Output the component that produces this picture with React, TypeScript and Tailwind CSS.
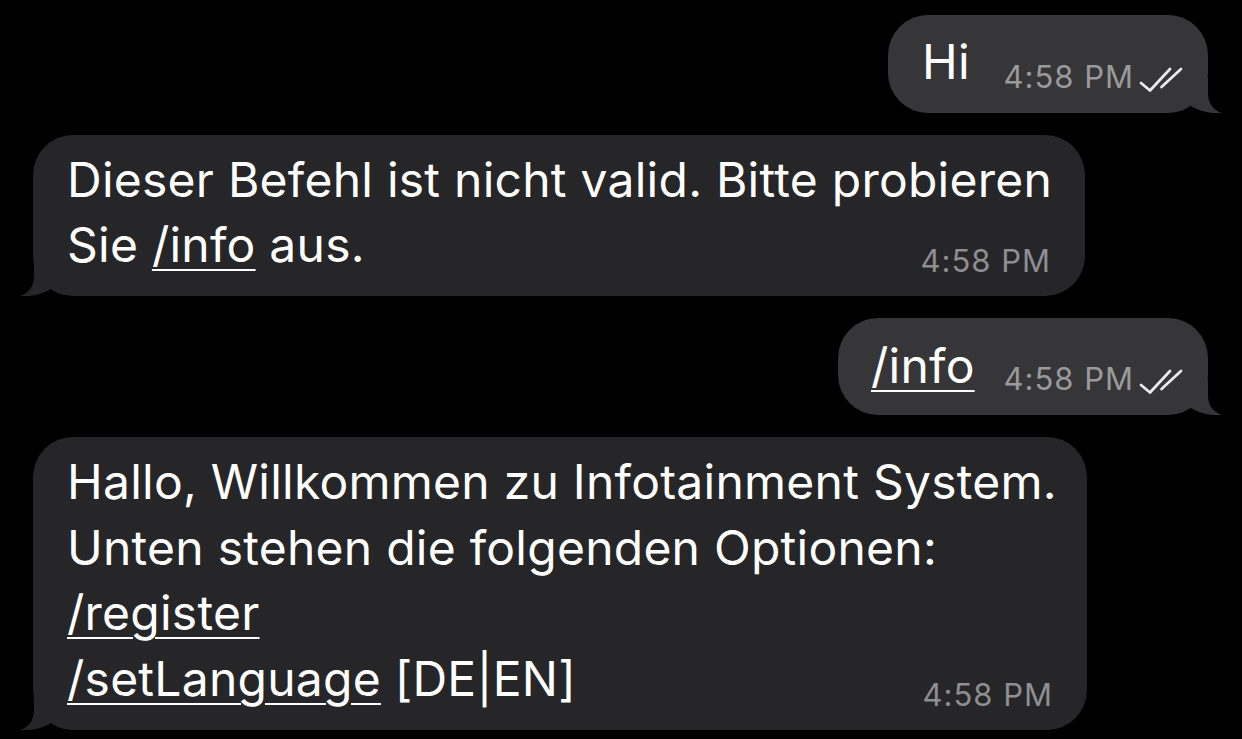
import React from "react";

const Checks = () => (
  <svg width="44" height="26" viewBox="0 0 44 26" fill="none" stroke="currentColor" strokeWidth="2.7" strokeLinecap="round" strokeLinejoin="round" className="text-white/90">
    <path d="M2 17 L11 24.5 L31 3" />
    <path d="M22.5 21 L42 3" />
  </svg>
);

const TailRight = () => (
  <svg width="40" height="36" viewBox="0 0 40 36" className="absolute right-[-14px] bottom-0" aria-hidden>
    <path d="M0 0 L26 0 L26 16 C26 26 31 33 40 36 C31 37 19 35 9 29 Z" fill="#363638" />
  </svg>
);

const TailLeft = () => (
  <svg width="40" height="36" viewBox="0 0 40 36" className="absolute left-[-13px] bottom-0 -scale-x-100" aria-hidden>
    <path d="M0 0 L26 0 L26 16 C26 26 31 33 40 36 C31 37 19 35 9 29 Z" fill="#262628" />
  </svg>
);

const Link = ({ children }: { children: React.ReactNode }) => (
  <span className="underline decoration-2 underline-offset-[7px]">{children}</span>
);

const Time = ({ className = "" }: { className?: string }) => (
  <span className={`text-[31px] leading-none tracking-[1px] whitespace-nowrap ${className}`}>4:58 PM</span>
);

export default function App() {
  return (
    <div
      className="w-[1242px] h-[739px] bg-black overflow-hidden flex flex-col pt-[15px] gap-[22px] text-white"
      style={{ fontFamily: "Inter, 'Noto Sans', 'Liberation Sans', sans-serif" }}
    >
      {/* Outgoing: Hi */}
      <div className="self-end mr-[34px] relative w-[320px] h-[98px] bg-[#363638] rounded-[40px] pl-[34px] pr-[25px] flex items-center">
        <TailRight />
        <span className="relative text-[48px] leading-[65px] tracking-[0.25px] -mt-[6px]">Hi</span>
        <div className="relative ml-auto flex items-end gap-[5px] mt-[24px]">
          <Time className="text-[#9a9a9c]" />
          <Checks />
        </div>
      </div>

      {/* Incoming 1 */}
      <div className="self-start ml-[33px] relative w-[1052px] bg-[#262628] rounded-[40px] pl-[34px] pr-[34px] pt-[12px] pb-[19px]">
        <TailLeft />
        <div className="relative text-[48px] leading-[65px] tracking-[0.25px] whitespace-nowrap">
          <div>Dieser Befehl ist nicht valid. Bitte probieren</div>
          <div className="flex items-end">
            <span>
              Sie <Link>/info</Link> aus.
            </span>
            <Time className="ml-auto mb-[1px] text-[#8e8e93]" />
          </div>
        </div>
      </div>

      {/* Outgoing: /info */}
      <div className="self-end mr-[34px] relative w-[370px] h-[97px] bg-[#363638] rounded-[40px] pl-[33px] pr-[25px] flex items-center">
        <TailRight />
        <span className="relative text-[48px] leading-[65px] tracking-[0.25px] -mt-[3px]">
          <Link>/info</Link>
        </span>
        <div className="relative ml-auto flex items-end gap-[5px] mt-[24px]">
          <Time className="text-[#9a9a9c]" />
          <Checks />
        </div>
      </div>

      {/* Incoming 2 */}
      <div className="self-start ml-[33px] relative w-[1054px] bg-[#262628] rounded-[40px] pl-[34px] pr-[34px] pt-[12px] pb-[19px]">
        <TailLeft />
        <div className="relative text-[48px] leading-[65.5px] tracking-[0.25px] whitespace-nowrap">
          <div>Hallo, Willkommen zu Infotainment System.</div>
          <div>Unten stehen die folgenden Optionen:</div>
          <div>
            <Link>/register</Link>
          </div>
          <div className="flex items-end">
            <span>
              <Link>/setLanguage</Link> [DE|EN]
            </span>
            <Time className="ml-auto mb-[1px] text-[#8e8e93]" />
          </div>
        </div>
      </div>
    </div>
  );
}
